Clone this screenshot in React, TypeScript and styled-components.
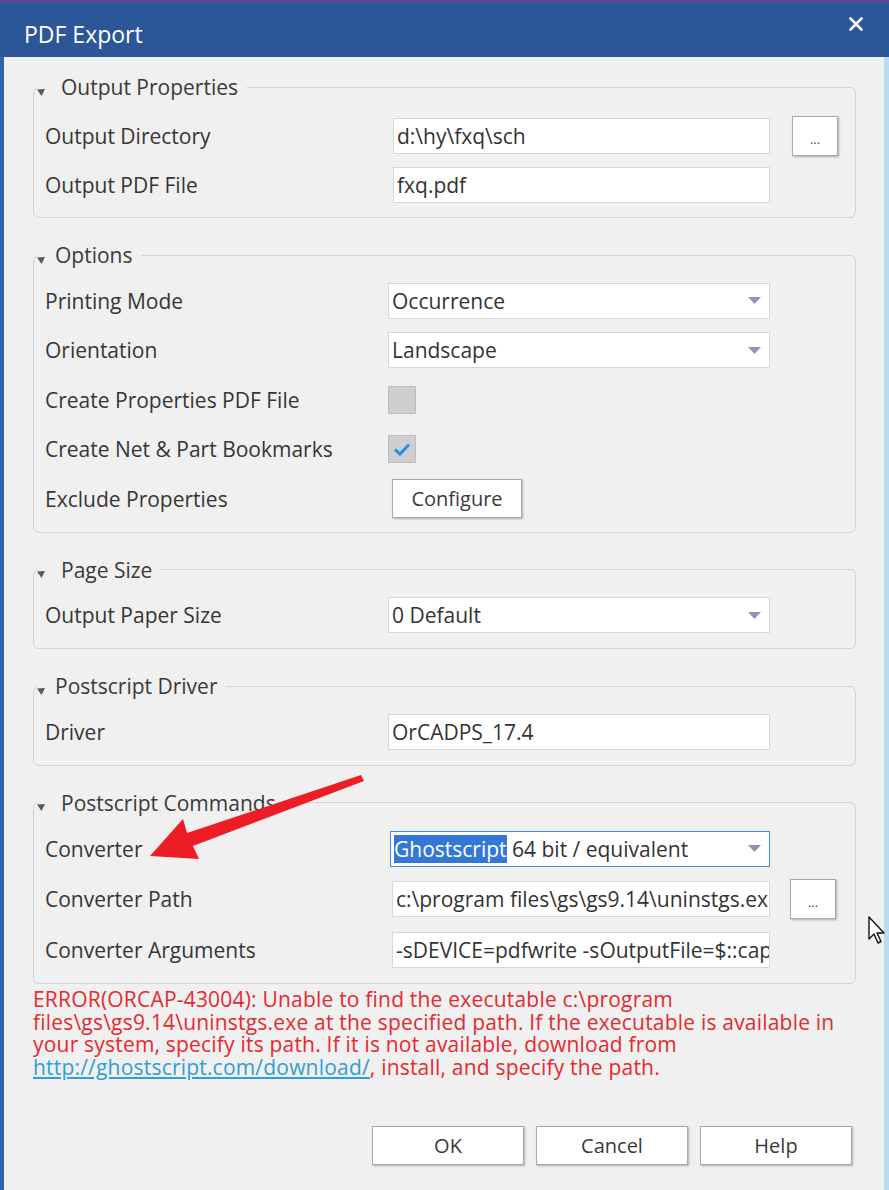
import React from 'react';
import styled, { createGlobalStyle } from 'styled-components';

const Global = createGlobalStyle`
  html, body { margin: 0; padding: 0; background: #f0f0f0; }
  body { font-family: "Open Sans", "Noto Sans", sans-serif; }
  #root { width: 889px; height: 1190px; }
`;

const Window = styled.div`
  position: relative;
  width: 889px;
  height: 1190px;
  display: flex;
  flex-direction: column;
  background: #f0f0f0;
  overflow: hidden;
`;

const TitleBar = styled.div`
  flex: none;
  height: 57px;
  box-sizing: border-box;
  background: #2b5698;
  border-top: 2px solid #6a3f8e;
  display: flex;
  justify-content: space-between;
  padding: 0 26px 0 24px;
  color: #fff;
`;

const Title = styled.div`
  font-size: 23px;
  line-height: 30px;
  padding-top: 17px;
`;

const Close = styled.div`
  padding-top: 12px;
`;

const Body = styled.div`
  flex: 1;
  display: flex;
  flex-direction: column;
  border-left: 4px solid #3164ab;
  border-right: 5px solid #b9dcf4;
  padding: 17px 28px 0 29px;
`;

const Group = styled.fieldset<{ $top?: number; $bottom?: number }>`
  margin: 0;
  min-width: 0;
  border: 1px solid #d3d3d3;
  border-radius: 6px;
  padding: ${p => p.$top ?? 8}px 11px ${p => p.$bottom ?? 8}px 11px;
  & + & { margin-top: 24px; }
`;

const Legend = styled.legend<{ $gap: number }>`
  display: flex;
  align-items: center;
  gap: ${p => p.$gap}px;
  margin-left: -8px;
  padding: 0 9px 0 0;
  font-size: 21px;
  line-height: 26px;
  color: #3a3a3a;
`;

const Glyph = styled.svg`
  margin-top: 10px;
  flex: none;
`;

const Row = styled.div<{ $h?: number }>`
  display: grid;
  grid-template-columns: 345px 380px auto;
  align-items: center;
  height: ${p => p.$h ?? 49.5}px;
`;

const Label = styled.div`
  font-size: 21px;
  color: #363636;
  white-space: nowrap;
`;

const Field = styled.div<{ $shift?: number }>`
  height: 36px;
  box-sizing: border-box;
  margin-left: ${p => p.$shift ?? 0}px;
  background: #fff;
  border: 1px solid #d8d8d8;
  display: flex;
  align-items: center;
  padding: 0 3px;
  font-size: 21px;
  color: #333;
  white-space: nowrap;
  overflow: hidden;
`;

const SelectBox = styled(Field)<{ $focus?: boolean }>`
  border: 1px solid ${p => p.$focus ? '#3d8ee0' : '#d8d8d8'};
  justify-content: space-between;
  padding-right: 8px;
`;

const Highlight = styled.span`
  background: #3478d6;
  color: #fff;
`;

const Check = styled.div`
  width: 28px;
  height: 28px;
  margin-left: -2px;
  box-sizing: border-box;
  background: #cfcfcf;
  border: 1px solid #bdbdbd;
  display: flex;
  align-items: center;
  justify-content: center;
`;

const Button = styled.button<{ $w: number; $h: number; $shift?: number }>`
  width: ${p => p.$w}px;
  height: ${p => p.$h}px;
  margin-left: ${p => p.$shift ?? 0}px;
  background: #fff;
  border: 1px solid #a9a9a9;
  box-shadow: 1px 1px 2px rgba(0, 0, 0, 0.28);
  font-family: "Open Sans", "Noto Sans", sans-serif;
  font-size: 20px;
  color: #3a3a3a;
  padding: 0;
  display: flex;
  align-items: center;
  justify-content: center;
`;

const Dots = styled(Button)`
  font-size: 13px;
  padding-top: 6px;
  color: #555;
`;

const ErrorText = styled.div`
  margin-top: 4px;
  font-size: 21px;
  letter-spacing: 0.2px;
  line-height: 22.6px;
  color: #e52a2f;
`;

const Link = styled.a`
  color: #2e9fd8;
  text-decoration: underline;
`;

const ButtonBar = styled.div`
  display: flex;
  justify-content: flex-end;
  gap: 12px;
  padding-right: 4px;
  margin-top: 48px;
`;

const Overlay = styled.svg<{ $x: number; $y: number }>`
  position: absolute;
  left: ${p => p.$x}px;
  top: ${p => p.$y}px;
  pointer-events: none;
`;

const Tri = () => (
  <Glyph width="8" height="7" viewBox="0 0 8 7">
    <polygon points="0,0.5 8,0 4.5,7" fill="#5a5a5a" />
  </Glyph>
);

const DropArrow = () => (
  <svg width="13" height="7" viewBox="0 0 13 7">
    <polygon points="0,0 13,0 6.5,7" fill="#8d96b3" />
  </svg>
);

const GroupBox: React.FC<{
  title: string;
  gap?: number;
  top?: number;
  bottom?: number;
  children: React.ReactNode;
}> = ({ title, gap = 16, top, bottom, children }) => (
  <Group $top={top} $bottom={bottom}>
    <Legend $gap={gap}>
      <Tri />
      <span>{title}</span>
    </Legend>
    {children}
  </Group>
);

export default function App() {
  return (
    <Window>
      <Global />
      <TitleBar>
        <Title>PDF Export</Title>
        <Close>
          <svg width="14" height="14" viewBox="0 0 14 14">
            <path d="M1.5 1.5 L12.5 12.5 M12.5 1.5 L1.5 12.5" stroke="#fff" strokeWidth="2.6" strokeLinecap="round" />
          </svg>
        </Close>
      </TitleBar>
      <Body>
        <GroupBox title="Output Properties" top={11} bottom={7}>
          <Row>
            <Label>Output Directory</Label>
            <Field $shift={3}>d:\hy\fxq\sch</Field>
            <Dots $w={46} $h={40} $shift={22}>...</Dots>
          </Row>
          <Row>
            <Label>Output PDF File</Label>
            <Field $shift={3}>fxq.pdf</Field>
          </Row>
        </GroupBox>

        <GroupBox title="Options" gap={10}>
          <Row>
            <Label>Printing Mode</Label>
            <SelectBox $shift={-2}>Occurrence<DropArrow /></SelectBox>
          </Row>
          <Row>
            <Label>Orientation</Label>
            <SelectBox $shift={-2}>Landscape<DropArrow /></SelectBox>
          </Row>
          <Row>
            <Label>Create Properties PDF File</Label>
            <Check />
          </Row>
          <Row>
            <Label>Create Net &amp; Part Bookmarks</Label>
            <Check>
              <svg width="18" height="14" viewBox="0 0 18 14">
                <path d="M2 7.5 L7 12 L16 2.5" stroke="#1f8ff0" strokeWidth="3" fill="none" />
              </svg>
            </Check>
          </Row>
          <Row>
            <Label>Exclude Properties</Label>
            <Button $w={130} $h={39} $shift={2}>Configure</Button>
          </Row>
        </GroupBox>

        <GroupBox title="Page Size">
          <Row>
            <Label>Output Paper Size</Label>
            <SelectBox $shift={-2}>0 Default<DropArrow /></SelectBox>
          </Row>
        </GroupBox>

        <GroupBox title="Postscript Driver" gap={10}>
          <Row>
            <Label>Driver</Label>
            <Field $shift={-2}>OrCADPS_17.4</Field>
          </Row>
        </GroupBox>

        <GroupBox title="Postscript Commands">
          <Row $h={50.5}>
            <Label>Converter</Label>
            <SelectBox $focus>
              <span><Highlight>Ghostscript</Highlight> 64 bit / equivalent</span>
              <DropArrow />
            </SelectBox>
          </Row>
          <Row $h={50.5}>
            <Label>Converter Path</Label>
            <Field $shift={2}>c:\program files\gs\gs9.14\uninstgs.exe</Field>
            <Dots $w={46} $h={40} $shift={20}>...</Dots>
          </Row>
          <Row $h={50.5}>
            <Label>Converter Arguments</Label>
            <Field $shift={2}>-sDEVICE=pdfwrite -sOutputFile=$::capPdfUtil::mPdfFile</Field>
          </Row>
        </GroupBox>

        <ErrorText>
          ERROR(ORCAP-43004): Unable to find the executable c:\program<br />
          files\gs\gs9.14\uninstgs.exe at the specified path. If the executable is available in<br />
          your system, specify its path. If it is not available, download from<br />
          <Link href="#">http://ghostscript.com/download/</Link>, install, and specify the path.
        </ErrorText>

        <ButtonBar>
          <Button $w={152} $h={39}>OK</Button>
          <Button $w={152} $h={39}>Cancel</Button>
          <Button $w={152} $h={39}>Help</Button>
        </ButtonBar>
      </Body>

      <Overlay $x={140} $y={765} width="230" height="100" viewBox="140 765 230 100">
        <polygon
          points="150,856 183,819 187,833 361,775 364,781 193,846 199,859"
          fill="#ee1c25"
        />
      </Overlay>

      <Overlay $x={867} $y={915} width="22" height="32" viewBox="0 0 22 32">
        <path
          d="M2 2 L2 24 L7 19 L11 28 L14 26.5 L10 18 L17 18 Z"
          fill="#fff"
          stroke="#111"
          strokeWidth="1.4"
          strokeLinejoin="round"
        />
      </Overlay>
    </Window>
  );
}
